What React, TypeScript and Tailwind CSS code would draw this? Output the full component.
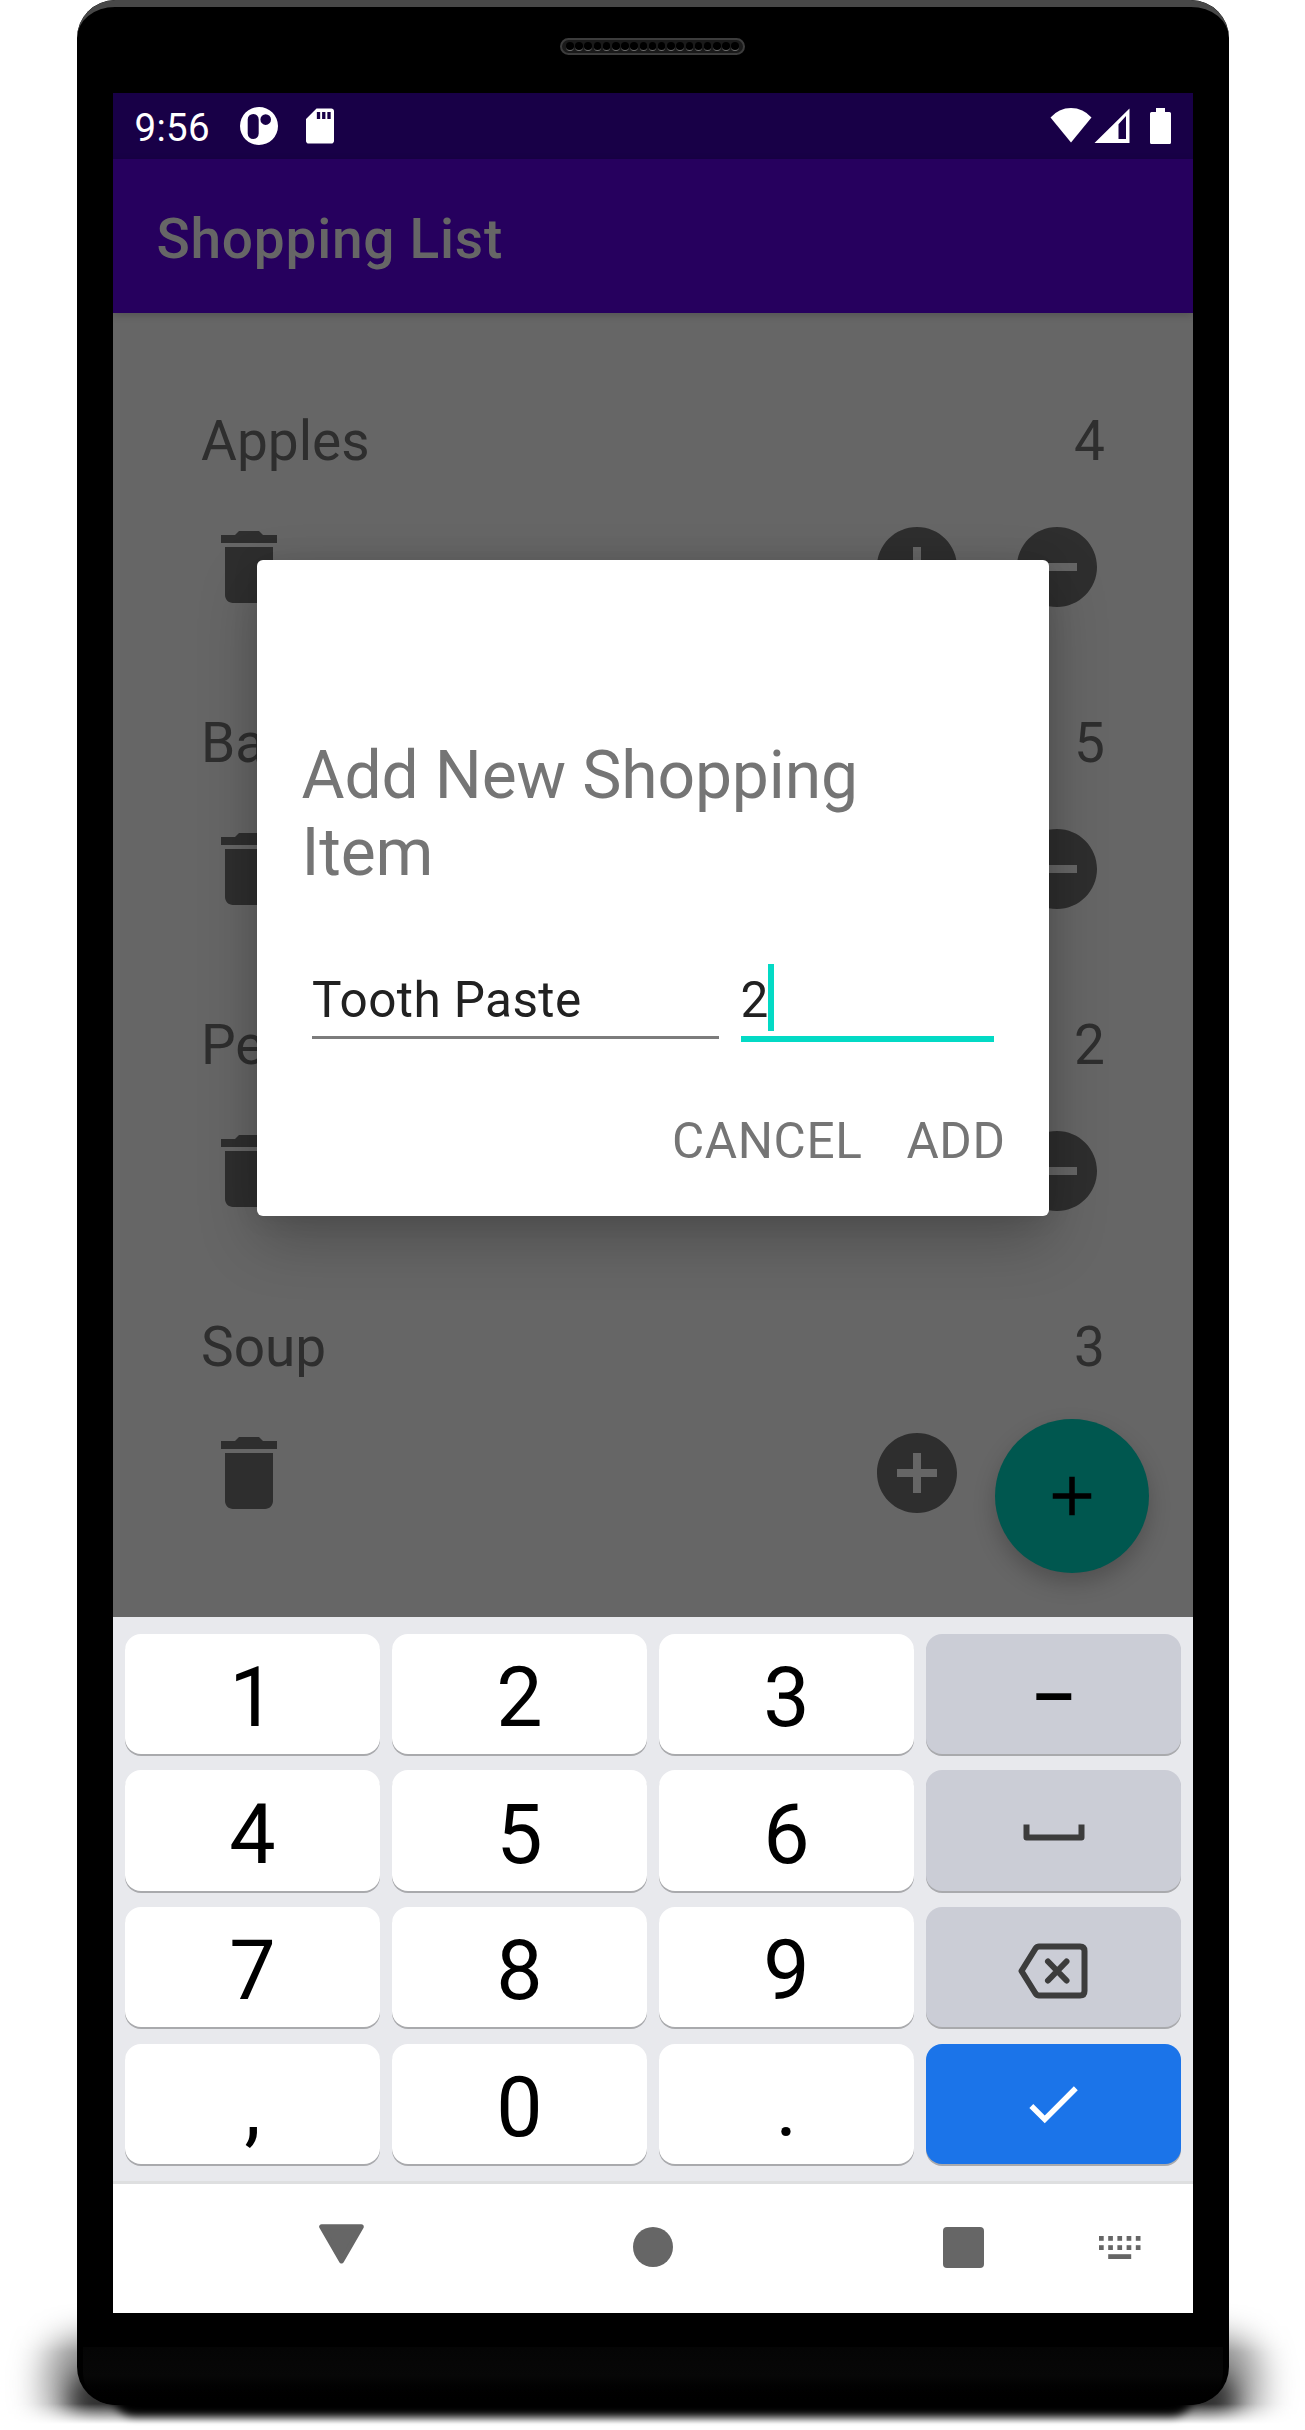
import React from "react";

const items = [
  { name: "Apples", count: 4 },
  { name: "Ba", count: 5 },
  { name: "Pe", count: 2 },
  { name: "Soup", count: 3 },
];

function TrashIcon() {
  return (
    <svg viewBox="0 0 24 24" className="size-24 fill-[#2e2e2e]">
      <path d="M6 19c0 1.1.9 2 2 2h8c1.1 0 2-.9 2-2V7H6v12zM19 4h-3.5l-1-1h-5l-1 1H5v2h14V4z" />
    </svg>
  );
}

function PlusCircleIcon() {
  return (
    <svg viewBox="0 0 24 24" className="size-24 fill-[#2e2e2e]">
      <path d="M12 2C6.48 2 2 6.48 2 12s4.48 10 10 10 10-4.48 10-10S17.52 2 12 2zm5 11h-4v4h-2v-4H7v-2h4V7h2v4h4v2z" />
    </svg>
  );
}

function MinusCircleIcon() {
  return (
    <svg viewBox="0 0 24 24" className="size-24 fill-[#2e2e2e]">
      <path d="M12 2C6.48 2 2 6.48 2 12s4.48 10 10 10 10-4.48 10-10S17.52 2 12 2zm5 11H7v-2h10v2z" />
    </svg>
  );
}

function StatusBar() {
  return (
    <div className="flex h-[66px] items-center justify-between bg-[#180047] px-[22px] text-white">
      <div className="flex items-center">
        <span className="w-[105px] pt-1 text-[38.5px] leading-[46px] tracking-[0.3px]">9:56</span>
        <svg viewBox="0 0 38 38" className="size-[38px] fill-white">
          <path
            fillRule="evenodd"
            d="M19 0a19 19 0 1 0 0 38a19 19 0 1 0 0-38zM13.200 7a5.500 5.500 0 0 1 5.500 5.500v14a5.500 5.500 0 0 1-11 0v-14a5.500 5.500 0 0 1 5.500-5.500zM25.700 7.300a5.300 5.300 0 1 1 0 10.600a5.300 5.300 0 1 1 0-10.600z"
          />
        </svg>
        <svg viewBox="0 0 24 24" className="ml-[21px] size-[42px] fill-white">
          <path
            fillRule="evenodd"
            d="M18.500 2H10L4 8v12.500c0 .8.700 1.500 1.500 1.500h13c.8 0 1.500-.7 1.500-1.500v-17c0-.8-.7-1.500-1.500-1.500zM12.100 8h-1.900V4h1.900zM15.100 8h-1.900V4h1.900zM18.100 8h-1.900V4h1.900z"
          />
        </svg>
      </div>
      <svg viewBox="0 0 121 36" className="h-9 w-[121px] fill-white">
        <path d="M0.500 9.500A27 27 0 0 1 41.500 9.500L21 34.500z" />
        <path fillRule="evenodd" d="M44.500 35H79.500V.5zM68.500 16.200L76 8V31H68.500z" />
        <path d="M106 0h9v4h4.500a1.500 1.500 0 0 1 1.500 1.500v29a1.500 1.500 0 0 1-1.500 1.500h-18a1.500 1.500 0 0 1-1.500-1.500v-29a1.500 1.500 0 0 1 1.500-1.500h4.500z" />
      </svg>
    </div>
  );
}

function ItemRow({ name, count }: { name: string; count: number }) {
  return (
    <div>
      <div className="-mr-[0.5px] flex justify-between pl-[0.5px] text-[55px] leading-[64px] text-[#2e2e2e]">
        <span>{name}</span>
        <span>{count}</span>
      </div>
      <div className="mt-[46px] flex">
        <TrashIcon />
        <div className="ml-auto flex gap-11">
          <PlusCircleIcon />
          <MinusCircleIcon />
        </div>
      </div>
    </div>
  );
}

function AddDialog() {
  return (
    <div className="absolute left-36 top-[467px] h-[656px] w-[792px] rounded-[6px] bg-white px-11 pt-[177px] text-[#757575] shadow-[0_24px_60px_rgba(0,0,0,0.24),0_0_26px_rgba(0,0,0,0.1)]">
      <h2 className="pl-px text-[66px] leading-[77px] tracking-[-0.15px]">
        Add New Shopping
        <br />
        Item
      </h2>
      <div className="mt-[73px] flex gap-[22px] pl-[11px] text-[49.5px] leading-[72px] text-[#212121]">
        <div className="h-[75px] w-[407px] border-b-[3px] border-[#7c7c7c] pl-[0.5px] tracking-[0.4px]">Tooth Paste</div>
        <div className="flex h-[78px] w-[253px] border-b-[6px] border-[#03dac5]">
          <span>2</span>
          <span className="h-[67px] w-[6px] bg-[#03dac5]" />
        </div>
      </div>
      <div className="-mr-px mt-[70px] flex justify-end gap-11 text-[49.5px] leading-[58px] tracking-[0.6px]">
        <span>CANCEL</span>
        <span>ADD</span>
      </div>
    </div>
  );
}

function Key({ children, tone = "plain" }: { children: React.ReactNode; tone?: "plain" | "side" | "done" }) {
  const fill = { plain: "bg-white", side: "bg-[#cbcdd6]", done: "bg-[#1b74e9]" }[tone];
  return (
    <div
      className={`flex h-[120.500px] w-[255px] items-center justify-center rounded-2xl text-[82.5px] leading-none text-black shadow-[0_2px_0_#a9aaad] ${fill}`}
    >
      {children}
    </div>
  );
}

function Digit({ value }: { value: string }) {
  return (
    <Key>
      <span className="pl-px pt-[9px]">{value}</span>
    </Key>
  );
}

function Keyboard() {
  return (
    <div className="h-[567px] border-b-[3px] border-[#dedfe0] bg-[#e8e9ed] px-3 pt-[16.600px]">
      <div className="grid grid-cols-4 gap-x-3 gap-y-[16.200px]">
        <Digit value="1" />
        <Digit value="2" />
        <Digit value="3" />
        <Key tone="side">
          <span className="pl-px pt-[9px] text-[70px] font-medium">–</span>
        </Key>
        <Digit value="4" />
        <Digit value="5" />
        <Digit value="6" />
        <Key tone="side">
          <svg viewBox="0 0 62 17" className="ml-px mt-[3px] h-[17px] w-[62px] fill-none stroke-[#3c3c3c] stroke-[6]">
            <path strokeLinejoin="round" d="M3.500 .5V13.500H58.500V.5" />
          </svg>
        </Key>
        <Digit value="7" />
        <Digit value="8" />
        <Digit value="9" />
        <Key tone="side">
          <svg viewBox="0 0 70 56" className="mt-[7px] h-14 w-[70px] fill-none stroke-[#3c3c3c] stroke-[6]">
            <path strokeLinejoin="round" d="M21 3.500H62Q66.500 3.500 66.500 8V48Q66.500 52.500 62 52.500H21Q19 52.500 17.500 50.500L3.500 28L17.500 5.500Q19 3.500 21 3.500z" />
            <path strokeLinecap="round" d="M30 18.500L48.500 37.500M48.500 18.500L30 37.500" />
          </svg>
        </Key>
        <Digit value="," />
        <Digit value="0" />
        <Digit value="." />
        <Key tone="done">
          <svg viewBox="0 0 24 24" className="size-[66px] fill-white">
            <path d="M9 16.170L4.830 12l-1.420 1.410L9 19 21 7l-1.410-1.410z" />
          </svg>
        </Key>
      </div>
    </div>
  );
}

function NavigationBar() {
  return (
    <div className="flex h-[129px] bg-white pl-[206px] pt-10">
      <svg viewBox="0 0 45 40" className="h-10 w-[45px] fill-[#666] stroke-[#666] stroke-[5]">
        <path strokeLinejoin="round" d="M2.700 2.700H42.300L22.500 37z" />
      </svg>
      <div className="ml-[269px] mt-[3px] size-10 rounded-full bg-[#666]" />
      <div className="ml-[270px] mt-[3px] size-[41px] rounded-[4px] bg-[#666]" />
      <svg viewBox="0 0 42 24" className="ml-[115px] mt-3 h-6 w-[42px] fill-[#666]">
        {[0, 9.2, 18.4, 27.6, 36.8].map((x) => (
          <React.Fragment key={x}>
            <rect x={x} y="0" width="4.700" height="4.800" />
            <rect x={x} y="9.200" width="4.700" height="4.800" />
          </React.Fragment>
        ))}
        <rect x="9.200" y="18.200" width="23" height="4.800" />
      </svg>
    </div>
  );
}

function Speaker() {
  return (
    <div className="mx-auto flex h-[17px] w-[185px] items-center justify-center gap-[1.700px] rounded-full border-2 border-[#3c3c3c] bg-[#1a1a1a]">
      {Array.from({ length: 19 }, (_, i) => (
        <span key={i} className="h-[9.500px] w-[7.500px] rounded-full border-b border-[#707070] bg-black" />
      ))}
    </div>
  );
}

export default function App() {
  return (
    <div className="relative h-[2430px] w-[1305px] overflow-hidden bg-white font-['Roboto',sans-serif]">
      {/* Floor shadow under the handset */}
      <div className="absolute inset-x-0 top-[2280px] h-[144px] overflow-hidden [mask-image:linear-gradient(to_bottom,transparent_14%,black_50%,black_86%,transparent)]">
        <div className="absolute inset-x-[46px] top-[44px] h-[120px] rounded-[50px] bg-black/45 blur-[18px]" />
        <div className="absolute inset-x-[70px] top-[90px] h-[60px] rounded-[40px] bg-black/65 blur-[11px]" />
      </div>
      <div className="absolute left-[112px] top-[2370px] h-[46px] w-[1082px] rounded-[24px] bg-black blur-[4px]" />

      <div className="relative mx-auto h-[2405px] w-[1152px] overflow-hidden rounded-[38px] bg-black px-9">
        <div className="absolute inset-x-0 top-0 h-20 rounded-t-[38px] border-t-[7px] border-[#484848]" />
        <div className="absolute inset-x-1.5 bottom-0 h-[58px] rounded-b-[32px] bg-linear-to-b from-[#050505] via-[#070707] to-black" />
        <div className="h-[93px] pt-[38px]">
          <Speaker />
        </div>

        <div className="relative h-[2220px] w-[1080px] overflow-hidden bg-[#666]">
          <StatusBar />
          <header className="flex h-[154px] items-center bg-[#26005e] pl-11 text-[55px] font-medium leading-[64px] tracking-[0.75px] text-[#666] shadow-[0_2px_8px_rgba(0,0,0,0.2)]">
            <span className="mt-[5px]">Shopping List</span>
          </header>
          <main className="flex h-[1304px] flex-col gap-24 px-[88px] pt-24">
            {items.map((item) => (
              <ItemRow key={item.name} {...item} />
            ))}
          </main>
          <Keyboard />
          <NavigationBar />

          <div className="absolute left-[882px] top-[1326px] flex size-[154px] items-center justify-center rounded-full bg-[#00574f] shadow-[0_10px_22px_rgba(0,0,0,0.22)]">
            <svg viewBox="0 0 24 24" className="size-[66px] fill-black">
              <path d="M19 13h-6v6h-2v-6H5v-2h6V5h2v6h6v2z" />
            </svg>
          </div>
          <AddDialog />
        </div>
      </div>
    </div>
  );
}
